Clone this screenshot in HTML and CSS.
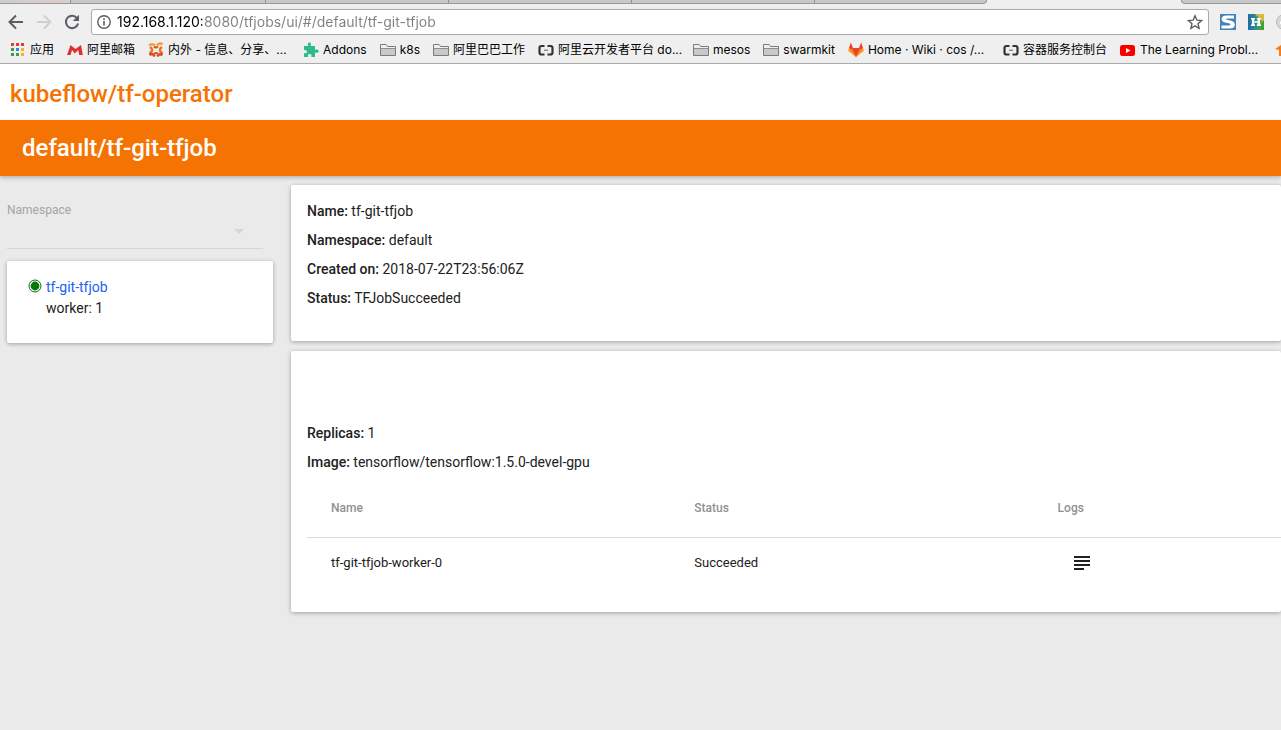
FILE: index.html
```html
<!DOCTYPE html>
<html lang="en">
<head>
<meta charset="utf-8">
<title>kubeflow/tf-operator</title>
<link rel="stylesheet" href="styles.css">
</head>
<body>
<svg class="defs" aria-hidden="true">
  <defs>
    <linearGradient id="h-fill" x1="0" y1="0" x2="1" y2="0"><stop offset="0" stop-color="#1d6ea5"/><stop offset=".5" stop-color="#2f8c8c"/><stop offset="1" stop-color="#6fae35"/></linearGradient>
    <symbol id="folder" viewBox="0 0 16 16"><path d="M.5 13.5v-11h5.6l1.6 2h7.800v9z" fill="#c8c8c8" stroke="#7b7b7b"/><path d="M1 3h4.900l1.500 2H15v1.500H1z" fill="#efefef"/><path d="M1 6.500h14" stroke="#8f8f8f"/></symbol>
    <symbol id="brackets" viewBox="0 0 16 16"><path d="M6.500 4H3.500Q1.500 4 1.500 6v4.500q0 2 2 2h3M9.500 4h3q2 0 2 2v4.500q0 2-2 2h-3" fill="none" stroke="#333" stroke-width="2.200"/><path d="M6 8.250h4" stroke="#777" stroke-width="1.200"/></symbol>
  </defs>
</svg>
<header class="browser">
  <div class="tabs">
    <span class="tab tab-first"></span><span class="tab tab-second"></span><span class="tab"></span><span class="tab"></span><span class="tab"></span><span class="tab tab-last"></span><span class="tab tab-active"></span><span class="tab tab-rest"></span>
  </div>
  <div class="toolbar">
    <div class="nav">
      <button class="tool" aria-label="Back"><svg width="16" height="16" viewBox="0 0 16 16" fill="none" stroke="#5a5d61" stroke-width="2"><path d="M15 8H2.500M8 1.500L1.500 8 8 14.500"/></svg></button>
      <button class="tool" aria-label="Forward"><svg width="16" height="16" viewBox="0 0 16 16" fill="none" stroke="#d0d0d0" stroke-width="2"><path d="M1 8h12.500M8 1.500L14.500 8 8 14.500"/></svg></button>
      <button class="tool" aria-label="Reload"><svg width="16" height="16" viewBox="0 0 16 16" fill="none"><path d="M13.300 4.500A6.200 6.200 0 1 0 14.100 9.500" stroke="#5a5d61" stroke-width="2"/><path d="M15 .8V7H8.800z" fill="#5a5d61"/></svg></button>
    </div>
    <div class="address">
      <svg width="14" height="14" viewBox="0 0 14 14" fill="none" stroke="#5a5d61"><circle cx="7" cy="7" r="6.200" stroke-width="1.400"/><path d="M7 6v4.500M7 3.300V5" stroke-width="1.600"/></svg>
      <input class="url" type="text" aria-label="Address" value="192.168.1.120:8080/tfjobs/ui/#/default/tf-git-tfjob">
      <button class="tool" aria-label="Bookmark"><svg width="16" height="16" viewBox="0 0 16 16"><path d="M8 1.800l1.900 4.400 4.700.4-3.600 3.100 1.100 4.600L8 11.800l-4.100 2.500L5 9.700 1.400 6.600l4.700-.4z" fill="none" stroke="#5a5d61" stroke-width="1.400"/></svg></button>
    </div>
    <div class="extensions">
      <button class="tool" aria-label="S extension"><svg width="16" height="16" viewBox="0 0 16 16"><path d="M0 0h16v16H0z" fill="#4383b8"/><path d="M14 4.600V1.500H6.500Q1.600 1.500 1.600 5q0 3 4.400 3.800 4.500.7 4.500 1.700 0 .9-2 .9H1.500v3.100H10q4.800 0 4.800-4 0-3.300-4.800-4.100-4.200-.6-4.200-1.300 0-.5 1.700-.5z" fill="#fff"/></svg></button>
      <button class="tool" aria-label="H extension"><svg width="16" height="16" viewBox="0 0 16 16"><path d="M0 0h16v16H0z" fill="url(#h-fill)"/><path d="M7 0h9v9z" fill="#d5b940"/><path d="M10 16h6V6z" fill="#41a22e"/><path d="M3 4h4v1.400h-.8v1.900h3.400V5.400h-.8V4H13v1.400h-.9v5.200h.9V12H8.800v-1.400h.8V8.700H6.200v1.900H7V12H3v-1.400h.9V5.400H3z" fill="#fff"/></svg></button>
      <button class="tool" aria-label="Profile"><svg width="16" height="16" viewBox="0 0 16 16"><circle cx="8" cy="8" r="7.500" fill="#d7d7d7" stroke="#bbb"/><path d="M4 8l3 3 5-6" fill="none" stroke="#fff" stroke-width="2"/></svg></button>
    </div>
  </div>
  <nav class="bookmarks" aria-label="Bookmarks">
    <a class="bookmark" href="#"><svg width="16" height="16" viewBox="0 0 16 16"><path d="M1 1h3v3H1zM6 1h3v3H6zM11 1h3v3h-3z" fill="#e53c2e"/><path d="M1 6h3v3H1zM1 11h3v3H1zM6 11h3v3H6z" fill="#35a052"/><path d="M6 6h3v3H6z" fill="#3b7fea"/><path d="M11 6h3v3h-3zM11 11h3v3h-3z" fill="#f6b414"/></svg>应用</a>
    <a class="bookmark" href="#"><svg width="16" height="16" viewBox="0 0 16 16"><path d="M0 13L3.500 3l5 4L14 3l1.800 10h-3.600l-1-5-3.400 3.500L5 8l-1.400 5z" fill="#df3030"/></svg>阿里邮箱</a>
    <a class="bookmark bookmark-long" href="#"><svg width="16" height="16" viewBox="0 0 16 16" fill="none" stroke-width="2.600"><path d="M1 3.500Q4 1 7 3.500M9 3.500Q12 0 14.500 2.500" stroke="#f5a13a"/><path d="M2 5Q6.500 8 1.500 11.500M14 5Q9.500 8 14.500 11.500" stroke="#ec7424"/><path d="M1.500 13Q5 10.500 6.500 14.500M14.500 13Q11 11 9.500 14.500" stroke="#d14a1c"/><path d="M6 4.500Q8 6.500 10 4.500M6 12Q8 10 10 12" stroke="#d9531c" stroke-width="2"/></svg>内外 - 信息、分享、...</a>
    <a class="bookmark" href="#"><svg width="16" height="16" viewBox="0 0 16 16"><path d="M1 4h4.200Q4 1 6.300.6 8.800 1 7.500 4H12v3.800q3.500-1 3.800 1.400-.3 2.300-3.800 1.200V15H8.300q1-3-1.600-3-2.700 0-1.500 3H1v-3.800q3 .6 3-1.500T1 8z" fill="#2dba8c"/></svg>Addons</a>
    <a class="bookmark" href="#"><svg width="16" height="16"><use href="#folder"/></svg>k8s</a>
    <a class="bookmark" href="#"><svg width="16" height="16"><use href="#folder"/></svg>阿里巴巴工作</a>
    <a class="bookmark bookmark-long" href="#"><svg width="16" height="16"><use href="#brackets"/></svg>阿里云开发者平台 do...</a>
    <a class="bookmark" href="#"><svg width="16" height="16"><use href="#folder"/></svg>mesos</a>
    <a class="bookmark" href="#"><svg width="16" height="16"><use href="#folder"/></svg>swarmkit</a>
    <a class="bookmark bookmark-long" href="#"><svg width="16" height="16" viewBox="0 0 16 16"><path d="M8 15L0 9l1-3h14l1 3z" fill="#fca326"/><path d="M8 15L1 6h4.500zM8 15l7-9h-4.500z" fill="#fc6d26"/><path d="M1 6l1.800-5.500L5 6h6l2.200-5.500L15 6l-4 1-3 8-3-8z" fill="#e24329"/></svg>Home · Wiki · cos /...</a>
    <a class="bookmark" href="#"><svg width="16" height="16"><use href="#brackets"/></svg>容器服务控制台</a>
    <a class="bookmark bookmark-long" href="#"><svg width="16" height="16" viewBox="0 0 16 16"><rect y="3" width="15" height="11" rx="2.500" fill="#f80000"/><path d="M6 6l4.500 2.500L6 11z" fill="#fff"/></svg>The Learning Probl...</a>
    <a class="bookmark" href="#" aria-label="More"><svg width="16" height="16" viewBox="0 0 16 16"><path d="M0 7l9-6v13H4V8z" fill="#f57c18"/></svg></a>
  </nav>
</header>
<div class="brand"><h1 class="title">kubeflow/tf-operator</h1></div>
<div class="jobbar"><h2 class="title">default/tf-git-tfjob</h2></div>
<div class="content">
  <aside class="sidebar">
    <div class="field">
      <label class="field-label" for="namespace">Namespace</label>
      <div class="field-row">
        <select class="field-select" id="namespace" disabled></select>
        <svg width="10" height="5" viewBox="0 0 10 5"><path d="M0 0h10L5 5z" fill="#d4d4d4"/></svg>
      </div>
    </div>
    <section class="card job">
      <svg class="job-state" width="14" height="14" viewBox="0 0 14 14"><circle cx="7" cy="7" r="6" fill="none" stroke="#0a6b0a"/><circle cx="7" cy="7" r="4.400" fill="#067806"/></svg>
      <div><a class="job-link" href="#">tf-git-tfjob</a><div>worker: 1</div></div>
    </section>
  </aside>
  <main class="main">
    <section class="card details">
      <p class="line"><b>Name:</b> tf-git-tfjob</p>
      <p class="line"><b>Namespace:</b> default</p>
      <p class="line"><b>Created on:</b> 2018-07-22T23:56:06Z</p>
      <p class="line"><b>Status:</b> TFJobSucceeded</p>
    </section>
    <section class="card replicas">
      <p class="line"><b>Replicas:</b> 1</p>
      <p class="line"><b>Image:</b> tensorflow/tensorflow:1.5.0-devel-gpu</p>
      <table class="pods">
        <thead><tr><th>Name</th><th>Status</th><th>Logs</th></tr></thead>
        <tbody><tr><td>tf-git-tfjob-worker-0</td><td>Succeeded</td><td><button class="tool logs" aria-label="Logs"><svg width="16" height="14" viewBox="0 0 16 14" fill="#212121"><path d="M0 0h16v2H0zM0 4h16v2H0zM0 8h16v2H0zM0 12h10v2H0z"/></svg></button></td></tr></tbody>
      </table>
    </section>
  </main>
</div>
</body>
</html>
```
FILE: styles.css
```css
* { box-sizing: border-box; }
html { overflow: hidden; }
body {
  margin: 0;
  min-height: 100vh;
  background: #eaeaea;
  color: #212121;
  font: 14px/21px Roboto, sans-serif;
}
.defs { position: absolute; width: 0; height: 0; }
svg { display: block; flex: none; }
.tool { display: block; margin: 0; padding: 0; border: 0; background: none; }

.browser {
  background: #efefef;
  border-bottom: 1px solid #aaa;
  color: #000;
}
.tabs { display: flex; height: 4px; }
.tab {
  flex: 0 0 183px;
  background: #c9c9c9;
  border-right: 1px solid #8f8f8f;
  border-bottom: 1px solid #999;
}
.tab-first { flex-basis: 71px; background: linear-gradient(90deg, #cfcccb, #dccfcb); }
.tab-second { flex-basis: 195px; }
.tab-last { flex-basis: 172px; border-bottom-right-radius: 4px; }
.tab-active { flex-basis: 194px; background: #efefef; border: 0; }
.tab-rest { flex: 1 1 0; border-right: 0; border-left: 1px solid #8f8f8f; border-bottom-left-radius: 4px; }
.toolbar { display: flex; align-items: center; gap: 11px; padding: 5px 0 0 8px; overflow: hidden; }
.nav { display: flex; gap: 12px; width: 72px; flex: none; }
.address {
  display: flex;
  flex: 1;
  align-items: center;
  gap: 6px;
  height: 26px;
  padding: 0 5px;
  background: #fff;
  border: 1px solid #a9a9a9;
  border-radius: 3px;
}
.url {
  flex: 1;
  min-width: 0;
  height: 24px;
  padding: 0;
  border: 0;
  outline: 0;
  color: transparent;
  background: linear-gradient(90deg, #000 85px, #808080 85px) text;
  font: 14px/24px Inter, sans-serif;
}
.extensions { display: flex; flex: none; gap: 12px; width: 61px; }
.bookmarks {
  display: flex;
  gap: 13px;
  height: 28px;
  padding: 2px 0 0 10px;
  overflow: hidden;
}
.bookmark {
  display: flex;
  flex: none;
  align-items: center;
  gap: 4px;
  color: #000;
  font: 12px/26px Inter, "Noto Sans CJK SC", sans-serif;
  text-decoration: none;
  white-space: nowrap;
}
.bookmark-long { width: 142px; }

.title { margin: 0; font-size: 24px; font-weight: 500; line-height: 56px; }
.brand { padding: 2px 10px 0; height: 56px; background: #fff; color: #f57302; }
.jobbar {
  position: relative;
  padding: 0 22px;
  background: #f57302;
  color: #fff;
  box-shadow: 0 2px 4px rgba(0, 0, 0, .22);
}
.content { display: flex; gap: 18px; padding: 9px 0 0 7px; }
.sidebar { flex: 0 0 266px; padding-top: 14px; }
.field { display: block; width: 256px; margin-bottom: 12px; }
.field-label { display: block; color: #a5a5a5; font-size: 12px; line-height: 22px; }
.field-row {
  display: flex;
  align-items: center;
  height: 28px;
  padding: 0 19px 6px 0;
  border-bottom: 1px solid #d6d6d6;
}
.field-select { flex: 1; min-width: 0; height: 20px; border: 0; background: none; appearance: none; }
.card { background: #fff; border-radius: 2px; box-shadow: 0 1px 4px rgba(0, 0, 0, .32); }
.job { display: flex; gap: 4px; padding: 16px 21px 24px; }
.job-state { margin-top: 2px; }
.job-link { display: block; color: #1a62f2; text-decoration: none; }
.main { flex: 1; min-width: 0; }
.line { margin: 0 0 8px; }
.line b { font-weight: 500; }
.details { margin-bottom: 10px; padding: 16px 16px 24px; }
.replicas { padding: 72px 0 24px 16px; }
.pods { width: 100%; border-collapse: collapse; table-layout: fixed; font-size: 13px; }
.pods th {
  height: 56px;
  padding: 0 24px;
  border-bottom: 1px solid #dadada;
  color: #909090;
  font-size: 12px;
  font-weight: 500;
  text-align: left;
}
.pods th:nth-child(-n+2) { width: 37.3%; }
.pods td { height: 51px; padding: 0 24px; }
.logs { margin-left: 16px; }
```
